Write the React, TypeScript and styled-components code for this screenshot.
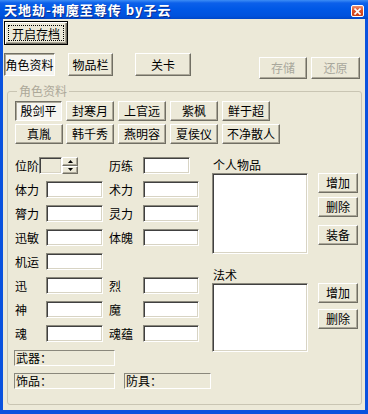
import React from 'react';
import styled, { createGlobalStyle, css } from 'styled-components';

const GlobalStyle = createGlobalStyle`
  html, body {
    margin: 0;
    padding: 0;
    background: #ffffff;
  }
  body {
    font-family: "Noto Sans CJK SC", "Liberation Sans", sans-serif;
    font-size: 12px;
  }
  * {
    box-sizing: border-box;
  }
`;

const raised = css`
  border: 1px solid;
  border-color: #ffffff #716f64 #716f64 #ffffff;
  box-shadow: inset -1px -1px 0 #aca899;
  background: #ece9d8;
`;

const sunkenBtn = css`
  border: 1px solid;
  border-color: #716f64 #ffffff #ffffff #716f64;
  box-shadow: inset 1px 1px 0 #aca899;
  background: #f6f5f0;
`;

const Window = styled.div`
  width: 368px;
  height: 414px;
  display: flex;
  flex-direction: column;
  background: #0a52de;
`;

const TitleBar = styled.div`
  height: 19px;
  flex: none;
  display: flex;
  align-items: flex-end;
  justify-content: space-between;
  padding: 0 4px 1px 4px;
  background: linear-gradient(to bottom, #3d8df5 0, #0c60ea 3px, #0058e6 9px, #0052dd 16px, #0047c8 19px);
`;

const Title = styled.span`
  color: #ffffff;
  font-weight: bold;
  font-size: 13px;
  line-height: 16px;
  letter-spacing: 1px;
  white-space: pre;
  text-shadow: 1px 1px 0 #0a2a8a;
`;

const CloseBox = styled.div`
  width: 13px;
  height: 12px;
  margin-bottom: 1px;
  border: 1px solid #ffffff;
  border-radius: 2px;
  background: linear-gradient(to bottom, #ec9070, #dc5128 45%, #c9401a);
  display: flex;
  align-items: center;
  justify-content: center;
`;

const Client = styled.div`
  flex: 1;
  margin: 0 3px 4px 3px;
  background: #ece9d8;
  padding: 2px 0 0 1px;
  display: flex;
  flex-direction: column;
`;

const Button = styled.button<{ $w: number; $h?: number; $pressed?: boolean; $disabled?: boolean }>`
  ${(p) => (p.$pressed ? sunkenBtn : raised)}
  width: ${(p) => p.$w}px;
  height: ${(p) => p.$h ?? 20}px;
  flex: none;
  padding: 0;
  margin: 0;
  font-family: inherit;
  font-size: 12px;
  line-height: 14px;
  color: ${(p) => (p.$disabled ? '#a8a79c' : '#000000')};
  display: flex;
  align-items: center;
  justify-content: center;
  border-radius: 0;
`;

const DefaultButton = styled.button`
  position: relative;
  width: 64px;
  height: 24px;
  padding: 0;
  margin: 0;
  font-family: inherit;
  font-size: 12px;
  color: #000;
  background: #ece9d8;
  border: 1px solid #000000;
  box-shadow: inset 1px 1px 0 #ffffff, inset -1px -1px 0 #716f64, inset -2px -2px 0 #aca899;
  &::after {
    content: '';
    position: absolute;
    inset: 3px;
    border: 1px dotted #000000;
  }
`;

const TabRow = styled.div`
  display: flex;
  align-items: flex-start;
  margin-top: 8px;
  padding-right: 5px;
`;

const Spacer = styled.div`
  flex: 1;
`;

const Group = styled.fieldset`
  margin: 5px 3px 5px 3px;
  padding: 3px 0 0 7px;
  border: 1px solid #c9c5b3;
  border-radius: 3px;
  flex: 1;
  min-width: 0;
`;

const Legend = styled.legend`
  margin-left: 2px;
  padding: 0 2px;
  color: #aca899;
  font-size: 12px;
  line-height: 14px;
`;

const HeroGrid = styled.div`
  display: grid;
  grid-template-columns: 47px 48px 48px 48px 58px;
  column-gap: 4px;
  row-gap: 3px;
`;

const FormArea = styled.div`
  display: flex;
  margin-top: 13px;
`;

const LeftCol = styled.div`
  width: 197px;
  flex: none;
  display: flex;
  flex-direction: column;
`;

const Rows = styled.div`
  display: flex;
  flex-direction: column;
  gap: 7px;
`;

const FieldRow = styled.div`
  display: grid;
  grid-template-columns: 94px 1fr;
  height: 17px;
`;

const Cell = styled.div`
  display: flex;
  align-items: center;
  height: 17px;
`;

const Label = styled.span<{ $w: number }>`
  width: ${(p) => p.$w}px;
  flex: none;
  font-size: 12px;
  line-height: 17px;
  color: #000000;
  white-space: nowrap;
`;

const Edit = styled.input<{ $w: number; $off?: boolean }>`
  width: ${(p) => p.$w}px;
  height: 17px;
  flex: none;
  margin: 0;
  padding: 0 2px;
  font-family: inherit;
  font-size: 12px;
  background: ${(p) => (p.$off ? '#ece9d8' : '#ffffff')};
  border: 1px solid;
  border-color: #8a887c #ffffff #ffffff #8a887c;
  box-shadow: inset 1px 1px 0 #404040, inset -1px -1px 0 #d8d4c4;
  outline: none;
  border-radius: 0;
`;

const Spin = styled.div`
  width: 16px;
  height: 17px;
  flex: none;
  display: flex;
  flex-direction: column;
`;

const SpinBtn = styled.div`
  ${raised}
  flex: 1;
  display: flex;
  align-items: center;
  justify-content: center;
`;

const Statics = styled.div`
  display: flex;
  flex-direction: column;
  gap: 7px;
  margin: 8px 0 0 -1px;
`;

const StaticRow = styled.div`
  display: flex;
  gap: 9px;
`;

const Static = styled.div<{ $w: number }>`
  width: ${(p) => p.$w}px;
  height: 16px;
  border: 1px solid;
  border-color: #8a887c #ffffff #ffffff #8a887c;
  font-size: 12px;
  line-height: 14px;
  color: #000000;
  padding-left: 1px;
`;

const RightCol = styled.div`
  display: flex;
  flex-direction: column;
`;

const ListTitle = styled.div<{ $mt?: number }>`
  height: 16px;
  line-height: 16px;
  font-size: 12px;
  color: #000000;
  padding-left: 1px;
  margin-top: ${(p) => p.$mt ?? 0}px;
`;

const ListRow = styled.div`
  display: flex;
  gap: 10px;
`;

const ListBox = styled.div<{ $h: number }>`
  width: 96px;
  height: ${(p) => p.$h}px;
  background: #ffffff;
  border: 1px solid;
  border-color: #8a887c #ffffff #ffffff #8a887c;
  box-shadow: inset 1px 1px 0 #404040, inset -1px -1px 0 #d8d4c4;
`;

const ButtonCol = styled.div`
  display: flex;
  flex-direction: column;
`;

const Gap = styled.div<{ $h: number }>`
  height: ${(p) => p.$h}px;
`;

const Arrow = ({ up }: { up?: boolean }) => (
  <svg width="5" height="3" viewBox="0 0 5 3">
    <path d={up ? 'M2.5 0 L5 3 L0 3 Z' : 'M0 0 L5 0 L2.5 3 Z'} fill="#000" />
  </svg>
);

const heroes = ['殷剑平', '封寒月', '上官远', '紫枫', '鲜于超', '真胤', '韩千秀', '燕明容', '夏侯仪', '不净散人'];

const stats: [string, string | null][] = [
  ['体力', '术力'],
  ['膂力', '灵力'],
  ['迅敏', '体魄'],
  ['机运', null],
  ['迅', '烈'],
  ['神', '魔'],
  ['魂', '魂蕴'],
];

const App = () => (
  <>
    <GlobalStyle />
    <Window>
      <TitleBar>
        <Title>天地劫-神魔至尊传 by子云</Title>
        <CloseBox>
          <svg width="7" height="7" viewBox="0 0 7 7">
            <path d="M0.5 0.5 L6.5 6.5 M6.5 0.5 L0.5 6.5" stroke="#fff" strokeWidth="1.6" />
          </svg>
        </CloseBox>
      </TitleBar>
      <Client>
        <div>
          <DefaultButton>开启存档</DefaultButton>
        </div>
        <TabRow>
          <Button $w={51} $h={23} $pressed>角色资料</Button>
          <Button $w={45} $h={23} style={{ marginLeft: 13 }}>物品栏</Button>
          <Button $w={56} $h={23} style={{ marginLeft: 22 }}>关卡</Button>
          <Spacer />
          <Button $w={48} $h={22} $disabled style={{ marginTop: 4 }}>存储</Button>
          <Button $w={49} $h={22} $disabled style={{ marginTop: 4, marginLeft: 4 }}>还原</Button>
        </TabRow>
        <Group>
          <Legend>角色资料</Legend>
          <HeroGrid>
            {heroes.map((h, i) => (
              <Button key={h} $w={h.length > 3 ? 58 : i === 0 ? 47 : 48} $pressed={i === 0}>
                {h}
              </Button>
            ))}
          </HeroGrid>
          <FormArea>
            <LeftCol>
              <Rows>
                <FieldRow>
                  <Cell>
                    <Label $w={24}>位阶</Label>
                    <Edit $w={23} $off readOnly />
                    <Spin>
                      <SpinBtn><Arrow up /></SpinBtn>
                      <SpinBtn><Arrow /></SpinBtn>
                    </Spin>
                  </Cell>
                  <Cell>
                    <Label $w={34}>历练</Label>
                    <Edit $w={47} readOnly />
                  </Cell>
                </FieldRow>
                {stats.map(([a, b]) => (
                  <FieldRow key={a}>
                    <Cell>
                      <Label $w={31}>{a}</Label>
                      <Edit $w={57} readOnly />
                    </Cell>
                    {b && (
                      <Cell>
                        <Label $w={34}>{b}</Label>
                        <Edit $w={56} readOnly />
                      </Cell>
                    )}
                  </FieldRow>
                ))}
              </Rows>
              <Statics>
                <Static $w={101}>武器：</Static>
                <StaticRow>
                  <Static $w={101}>饰品：</Static>
                  <Static $w={87}>防具：</Static>
                </StaticRow>
              </Statics>
            </LeftCol>
            <RightCol>
              <ListTitle>个人物品</ListTitle>
              <ListRow>
                <ListBox $h={81} />
                <ButtonCol>
                  <Button $w={40}>增加</Button>
                  <Gap $h={4} />
                  <Button $w={40}>删除</Button>
                  <Gap $h={8} />
                  <Button $w={40}>装备</Button>
                </ButtonCol>
              </ListRow>
              <ListTitle $mt={13}>法术</ListTitle>
              <ListRow>
                <ListBox $h={69} />
                <ButtonCol>
                  <Button $w={40}>增加</Button>
                  <Gap $h={6} />
                  <Button $w={40}>删除</Button>
                </ButtonCol>
              </ListRow>
            </RightCol>
          </FormArea>
        </Group>
      </Client>
    </Window>
  </>
);

export default App;
